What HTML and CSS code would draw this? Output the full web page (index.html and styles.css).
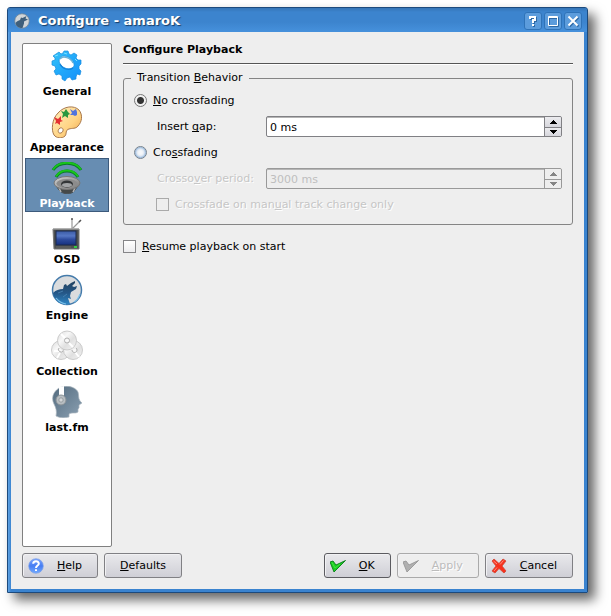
FILE: index.html
```html
<!DOCTYPE html>
<html lang="en">
<head>
<meta charset="utf-8">
<title>Configure - amaroK</title>
<link rel="stylesheet" href="styles.css">
</head>
<body>
<div class="window">
  <header class="titlebar">
    <svg class="title-icon" viewBox="0 0 32 32" aria-hidden="true">
      <circle cx="16" cy="16" r="14.500" fill="#d0d5d8" stroke="#6f8393" stroke-width="1.500"/>
      <path d="M3 20C6 16 9 15 12 14L14 9L17 10L25 6L23 11L28 13L20 17L20 21L17 30C9 30 4 26 3 20Z" fill="#3f5f7b"/>
    </svg>
    <span class="title">Configure - amaroK</span>
    <div class="window-controls">
      <button class="control" type="button" aria-label="Context help">
        <svg viewBox="0 0 12 12"><path d="M3 4V2H8V5H6V8M6 9V11" class="control-line"/></svg>
      </button>
      <button class="control" type="button" aria-label="Maximize">
        <svg viewBox="0 0 12 12"><path d="M1.500 1.500H10.500V10.500H1.500Z M1.500 2.500H10.500" class="control-box"/></svg>
      </button>
      <button class="control" type="button" aria-label="Close">
        <svg viewBox="0 0 12 12"><path d="M1.500 1.500L10.500 10.500M10.500 1.500L1.500 10.500" class="control-line"/></svg>
      </button>
    </div>
  </header>

  <div class="dialog">
    <div class="content">
      <nav class="sidebar">
        <a class="page" href="#general">
          <svg viewBox="0 0 32 32" aria-hidden="true">
            <defs><linearGradient id="gear" x1="0" y1="0" x2="1" y2="1"><stop offset="0" stop-color="#35c4f8"/><stop offset=".5" stop-color="#21a8fa"/><stop offset="1" stop-color="#1590fa"/></linearGradient></defs>
            <path fill="url(#gear)" stroke="#168de0" stroke-width=".7" stroke-linejoin="round" fill-rule="evenodd" d="M5 4L8 2L10 4L12 3L13 1L17 1L18 4L20 5L23 3L26 5L25 8L27 10L30 10L30 14L28 16L28 19L30 21L29 25L26 24L25 27L25 29L21 30L19 27L16 28L14 31L11 29L11 26L8 24L5 25L3 21L5 19L4 16L1 15L1 11L4 10L4 8L2 6ZM10 7C6 10 9 16 14 18C18 20 24 18 23 14C22 9 14 4 10 7Z"/>
            <path d="M9 9C12 5 20 8 22 13" fill="none" stroke="#6bb3d8" stroke-width="1.500"/>
            <path d="M9 14C11 19 18 21 22 18" fill="none" stroke="#1583d9" stroke-width="1.200"/>
            <path d="M4 6L7 5M13 3L16 4M24 9L26 11" stroke="#78e2ff"/>
          </svg>
          <span>General</span>
        </a>
        <a class="page" href="#appearance">
          <svg viewBox="0 0 32 32" aria-hidden="true">
            <defs><linearGradient id="wood" x1="0" y1="0" x2="1" y2="1"><stop offset="0" stop-color="#fff0c0"/><stop offset=".6" stop-color="#ffd383"/><stop offset="1" stop-color="#eea346"/></linearGradient></defs>
            <path d="M3 29C0 24 1 13 7 7C13 0 23-1 28 4C32 9 31 16 27 20C25 23 21 22 18 23C14 24 16 28 14 30C11 33 5 32 3 29ZM9 22C6 24 7 28 10 27C13 26 13 21 9 22Z" fill="url(#wood)" fill-rule="evenodd" stroke="#a8784b"/>
            <path d="M3 11L7 13L10 10L10 14L12 15L9 16L9 19L6 17L4 18L5 15Z" fill="#e43133"/>
            <path d="M10 5L13 6L15 3L17 6L19 8L17 9L17 12L14 10L11 12L12 8Z" fill="#2a9840"/>
            <path d="M19 3L22 5L25 3L26 6L26 9L24 10L22 9L19 9L21 7Z" fill="#5274dc"/>
          </svg>
          <span>Appearance</span>
        </a>
        <a class="page selected" href="#playback" aria-current="page">
          <svg viewBox="0 0 32 32" aria-hidden="true">
            <defs><linearGradient id="speaker" x1="0" y1="0" x2="1" y2="1"><stop offset="0" stop-color="#d5d5d5"/><stop offset=".6" stop-color="#999"/><stop offset="1" stop-color="#777"/></linearGradient></defs>
            <path d="M2 8C8-1 24-1 30 8M5 15C10 7 22 7 27 15" fill="none" stroke="#087b26" stroke-width="3"/>
            <path d="M2 7.500C8-1.500 24-1.500 30 7.500M5 14.500C10 6.500 22 6.500 27 14.500" fill="none" stroke="#18c51c" stroke-width="1.800"/>
            <path d="M4 22L8 28C12 33 21 33 24 28L28 22Z" fill="#454949" stroke="#4a5054"/>
            <path d="M8 26L10 30M24 26L22 30" stroke="#b5b5b5" stroke-width="1.500"/>
            <ellipse cx="16" cy="21" rx="13" ry="6.500" fill="url(#speaker)" stroke="#777"/>
            <ellipse cx="16" cy="21.500" rx="10.500" ry="4.500" fill="#8c8c8c"/>
            <ellipse cx="16" cy="22" rx="6" ry="3.500" fill="#333638"/>
            <ellipse cx="16" cy="23" rx="5" ry="2" fill="#a2a4a6"/>
          </svg>
          <span>Playback</span>
        </a>
        <a class="page" href="#osd">
          <svg viewBox="0 0 32 32" aria-hidden="true">
            <defs><linearGradient id="screen" x1="0" y1="0" x2="0" y2="1"><stop offset="0" stop-color="#3a5ba5"/><stop offset=".35" stop-color="#5577c4"/><stop offset=".6" stop-color="#2e4c9e"/><stop offset="1" stop-color="#15307e"/></linearGradient></defs>
            <path d="M21 11V1M22 10L29 3" stroke="#999" stroke-width="1.200"/>
            <path d="M21 0V2M28 4L30 2" stroke="#555" stroke-width="1.500"/>
            <path d="M2 11H28V31H3Z" fill="#4d5050" stroke="#777"/>
            <path d="M2 11H28" stroke="#aaa"/>
            <rect x="5" y="13" width="20" height="14" fill="url(#screen)" stroke="#1c2a4c"/>
            <path d="M5 29H20" stroke="#666"/><path d="M23 29H26" stroke="#30d941" stroke-width="1.800"/>
          </svg>
          <span>OSD</span>
        </a>
        <a class="page" href="#engine">
          <svg viewBox="0 0 32 32" aria-hidden="true">
            <defs><linearGradient id="wolf" x1="0" y1="0" x2="0" y2="1"><stop offset="0" stop-color="#23425f"/><stop offset=".5" stop-color="#245686"/><stop offset="1" stop-color="#2e86c4"/></linearGradient></defs>
            <circle cx="16" cy="16" r="14.500" fill="#dadcde" stroke="#457bab" stroke-width="1.500"/>
            <path d="M2 19C5 16 8 15 12 15L13 11L15 10L16 12L20 9L24 7L24 9L21 12L23 13L26 12L25 15L20 18L19 22L20 25L17 24L19 30C9 32 3 26 2 19Z" fill="url(#wolf)"/>
            <path d="M7 19L12 17M12 23L16 20" stroke="#4d86b5" stroke-width=".8"/>
            <path d="M5 24Q9 29 15 30M23 28Q27 26 29 20" fill="none" stroke="#7ec0e8" stroke-width="1.200"/>
          </svg>
          <span>Engine</span>
        </a>
        <a class="page" href="#collection">
          <svg viewBox="0 0 32 32" aria-hidden="true">
            <defs><linearGradient id="disc" x1="0" y1="0" x2="1" y2="1"><stop offset="0" stop-color="#dadada"/><stop offset=".35" stop-color="#f7f7f7"/><stop offset=".6" stop-color="#e0e0e0"/><stop offset="1" stop-color="#f5f5f5"/></linearGradient></defs>
            <g fill="url(#disc)" stroke="#c0c0c0" stroke-width=".8">
              <circle cx="10" cy="20" r="9.500"/><circle cx="22" cy="20" r="9.500"/><circle cx="16" cy="10.500" r="9.500"/>
            </g>
            <path d="M10 4L14 8M18 13L22 17M3 21L8 21M6 28L9 23M24 22L28 27" stroke="#fff" stroke-width="2"/>
            <g fill="#f8f8f8" stroke="#b0b0b0"><circle cx="16" cy="10.500" r="2.500"/><path d="M8 18A2.500 2.500 0 1 0 12 21M21 20A2.500 2.500 0 1 0 25 18"/></g>
          </svg>
          <span>Collection</span>
        </a>
        <a class="page" href="#lastfm">
          <svg viewBox="0 0 32 32" aria-hidden="true">
            <defs><linearGradient id="head" x1="0" y1="0" x2="1" y2="1"><stop offset="0" stop-color="#536b7e"/><stop offset="1" stop-color="#8ca1b3"/></linearGradient></defs>
            <path d="M5 30C6 25 5 22 3 18C0 12 2 6 8 2C14-1 24 0 27 6C28 9 27 12 29 15L31 17L28 19L28 22L27 23L27 26C25 28 20 26 18 28V31Q10 33 5 30Z" fill="url(#head)" stroke="#a9b4bd" stroke-width=".7"/>
            <path d="M8 10V1L13 0V10Z" fill="#fff"/>
            <circle cx="10" cy="14" r="5" fill="#b8bec2" stroke="#8a9297"/>
            <circle cx="10" cy="14" r="2.200" fill="#d3d6d8" stroke="#969da1"/>
          </svg>
          <span>last.fm</span>
        </a>
      </nav>

      <main class="main">
        <h1 class="heading">Configure Playback</h1>
        <fieldset class="group">
          <legend>Transition <u>B</u>ehavior</legend>
          <div class="rows">
            <div class="row">
              <input class="radio" type="radio" name="transition" id="no-crossfading" checked>
              <label for="no-crossfading"><u>N</u>o crossfading</label>
            </div>
            <div class="row field">
              <label for="gap">Insert <u>g</u>ap:</label>
              <div class="spin">
                <input type="text" id="gap" value="0 ms">
                <div class="steps">
                  <button type="button" aria-label="Increase gap"><svg viewBox="0 0 7 4"><path d="M3 0H4V1H5V2H6V3H7V4H0V3H1V2H2V1H3Z"/></svg></button>
                  <button type="button" aria-label="Decrease gap"><svg viewBox="0 0 7 4"><path d="M0 0H7V1H6V2H5V3H4V4H3V3H2V2H1V1H0Z"/></svg></button>
                </div>
              </div>
            </div>
            <div class="row">
              <input class="radio" type="radio" name="transition" id="crossfading">
              <label for="crossfading">Cro<u>s</u>sfading</label>
            </div>
            <div class="row field disabled">
              <label for="period">Crosso<u>v</u>er period:</label>
              <div class="spin">
                <input type="text" id="period" value="3000 ms" disabled>
                <div class="steps">
                  <button type="button" aria-label="Increase period" disabled><svg viewBox="0 0 7 4"><path d="M3 0H4V1H5V2H6V3H7V4H0V3H1V2H2V1H3Z"/></svg></button>
                  <button type="button" aria-label="Decrease period" disabled><svg viewBox="0 0 7 4"><path d="M0 0H7V1H6V2H5V3H4V4H3V3H2V2H1V1H0Z"/></svg></button>
                </div>
              </div>
            </div>
            <div class="row nested disabled">
              <input class="check" type="checkbox" id="manual" disabled>
              <label for="manual">Crossfade on man<u>u</u>al track change only</label>
            </div>
          </div>
        </fieldset>
        <div class="row resume">
          <input class="check" type="checkbox" id="resume">
          <label for="resume"><u>R</u>esume playback on start</label>
        </div>
      </main>
    </div>

    <footer class="actions">
      <button class="button" type="button">
        <svg viewBox="0 0 16 16" aria-hidden="true">
          <defs><linearGradient id="help" x1="0" y1="0" x2="0" y2="1"><stop offset="0" stop-color="#7ba5ff"/><stop offset=".5" stop-color="#467cf2"/><stop offset="1" stop-color="#72abff"/></linearGradient></defs>
          <circle cx="8" cy="8" r="7.300" fill="url(#help)" stroke="#7ca0e8" stroke-width=".7"/>
          <path d="M5.200 5.800C5.200 2.500 10.800 2.500 10.800 5.700C10.800 7.500 8 7.500 8 10M8 11.200V13" fill="none" stroke="#fff" stroke-width="2"/>
        </svg>
        <span><u>H</u>elp</span>
      </button>
      <button class="button text-only" type="button"><span><u>D</u>efaults</span></button>
      <button class="button default push" type="button">
        <svg viewBox="0 0 16 16" aria-hidden="true"><path d="M0 4L3 3L6 7L15.500 2.500L4 14Z" fill="#19cf20" stroke="#087c17" stroke-width=".9"/><path d="M2 4.500L5 10L10 6" fill="none" stroke="#4fe44a" stroke-width=".8"/></svg>
        <span><u>O</u>K</span>
      </button>
      <button class="button" type="button" disabled>
        <svg viewBox="0 0 16 16" aria-hidden="true"><path d="M0 4L3 3L6 7L15.500 2.500L4 14Z" fill="#b0b0b0" stroke="#979797" stroke-width=".9"/></svg>
        <span><u>A</u>pply</span>
      </button>
      <button class="button" type="button">
        <svg viewBox="0 0 16 16" aria-hidden="true"><path d="M1 3L3 1L8 5.500L12 1L15 3L11 8L15 13L13 15L8 10.500L4 15L1 13L5 8Z" fill="#f8301c" stroke="#cf4636" stroke-width=".8" stroke-linejoin="round"/><path d="M2.500 3L6 6M12.500 2.500L9 6.500M3 13L6 9.500" fill="none" stroke="#ff9080"/></svg>
        <span><u>C</u>ancel</span>
      </button>
    </footer>
  </div>
</div>
</body>
</html>
```
FILE: styles.css
```css
* {
  box-sizing: border-box;
}

body {
  margin: 0;
  padding: 7px 23px 23px 7px;
  background: #fff;
  color: #000;
  font: 11px/14px "DejaVu Sans", sans-serif;
}

button,
input {
  margin: 0;
  font: inherit;
  color: inherit;
}

svg {
  display: block;
  flex: none;
}

u {
  text-decoration: underline;
  text-decoration-skip-ink: none;
  text-underline-offset: 1px;
}

.window {
  display: flex;
  flex-direction: column;
  min-height: calc(100vh - 30px);
  border: 1px solid #1c4a7d;
  border-radius: 3px 3px 0 0;
  background: linear-gradient(90deg, #62a4e4, #3a83cf 3px);
  box-shadow: 7px 7px 12px rgba(0, 0, 0, 0.6);
}

.titlebar {
  display: flex;
  align-items: center;
  height: 24px;
  padding: 1px 5px 0 6px;
  border-radius: 2px 2px 0 0;
  background: linear-gradient(#3474b6, #3c84ce 4px, #3c84ce 14px, #4691dc);
}

.title-icon {
  width: 16px;
  height: 16px;
}

.title {
  flex: 1;
  padding-left: 8px;
  color: #fff;
  font-size: 13px;
  font-weight: bold;
  text-shadow: 1px 1px 1px #163c65;
}

.window-controls {
  display: flex;
  gap: 2px;
}

.control {
  display: grid;
  place-items: center;
  width: 18px;
  height: 18px;
  padding: 0;
  border: 1px solid #2f73b8;
  border-radius: 3px;
  background: #5c9cdc;
}

.control svg {
  width: 12px;
  height: 12px;
  fill: none;
  stroke: #fff;
  filter: drop-shadow(1px 1px 0 #2e69a5);
}

.control-line {
  stroke-width: 2;
}

.control-box {
  stroke-width: 1;
}

.dialog {
  display: flex;
  flex: 1;
  flex-direction: column;
  gap: 6px;
  margin: 0 3px 3px;
  padding: 11px;
  background: #eee;
}

.content {
  display: flex;
  flex: 1;
  gap: 11px;
}

.sidebar {
  display: flex;
  flex: none;
  flex-direction: column;
  gap: 2px;
  width: 90px;
  padding: 2px;
  border: 1px solid #808080;
  border-radius: 2px;
  background: #fff;
}

.page {
  display: flex;
  flex-direction: column;
  align-items: center;
  gap: 3px;
  height: 54px;
  padding-top: 3px;
  border: 1px solid transparent;
  color: #000;
  font-weight: bold;
  text-decoration: none;
}

.page svg {
  width: 32px;
  height: 32px;
}

.page.selected {
  border-color: #3c5a7c;
  background: #678db2;
  color: #fff;
}

.main {
  flex: 1;
  min-width: 0;
}

.heading {
  margin: 0;
  padding-bottom: 6px;
  border-bottom: 1px solid #555;
  box-shadow: 0 1px #fff;
  font-size: 11px;
  line-height: 14px;
}

.group {
  min-width: 0;
  margin: 7px 0 0;
  padding: 5px 10px 9px;
  border: 1px solid #848484;
  border-radius: 3px;
}

.group legend {
  margin-left: -3px;
  padding: 0 6px;
}

.rows {
  display: grid;
  gap: 5px;
}

.row {
  display: flex;
  align-items: center;
  gap: 6px;
  height: 21px;
}

.field {
  display: grid;
  grid-template-columns: 109px 1fr;
  gap: 0;
  padding-left: 23px;
}

.nested {
  padding-left: 22px;
}

.resume {
  margin-top: 11px;
}

.radio,
.check {
  flex: none;
  width: 13px;
  height: 13px;
  appearance: none;
  border: 1px solid #858588;
  background: linear-gradient(#fff, #ececee);
}

.radio {
  border: 1px solid #75818d;
  border-radius: 50%;
  background: #f5f7fa;
  box-shadow: inset 0 0 0 1px #a3c1e2, inset 0 0 2px 2px #c5d6ea;
}

.radio:checked {
  border: 1px solid #777;
  background: radial-gradient(circle, #333 3px, #f1f1f1 4px);
  box-shadow: none;
}

.check:disabled {
  border-color: #aaa;
  background: #eee;
}

.disabled label {
  color: #c6c6c6;
  text-shadow: 1px 1px #fff;
}

.spin {
  display: flex;
  height: 21px;
  overflow: hidden;
  border: 1px solid #808084;
  border-radius: 2px;
  background: #fff;
  box-shadow: inset 0 1px #b5b5b5;
}

.spin input {
  flex: 1;
  min-width: 0;
  padding: 2px 3px 0;
  border: 0;
  background: transparent;
}

.steps {
  display: grid;
  grid-template-rows: 1fr 1fr;
  width: 17px;
  border-left: 1px solid #808084;
}

.steps button {
  display: grid;
  place-items: center;
  min-height: 0;
  padding: 0;
  border: 0;
  background: linear-gradient(#ececef, #d6d6dc);
}

.steps button + button {
  border-top: 1px solid #808084;
}

.steps svg {
  width: 7px;
  height: 4px;
}

.disabled .spin {
  border-color: #999;
  background: #eee;
}

.disabled .spin input {
  color: #bebebe;
}

.disabled .steps,
.disabled .steps button + button {
  border-color: #999;
}

.disabled .steps button {
  background: #eee;
  fill: #858585;
}

.actions {
  display: flex;
  gap: 6px;
}

.button {
  display: flex;
  align-items: center;
  gap: 13px;
  height: 25px;
  padding: 0 15px 0 5px;
  border: 1px solid #808084;
  border-radius: 3px;
  background: linear-gradient(#e9e9ec, #cfcfd6);
  box-shadow: inset 1px 1px #f1f1f3;
}

.button svg {
  width: 16px;
  height: 16px;
}

.text-only {
  padding: 0 15px;
}

.default {
  border-color: #5b5b60;
}

.push {
  margin-left: auto;
}

.button:disabled {
  border-color: #aaa;
  background: #eee;
  color: #bcbcbc;
  text-shadow: 1px 1px #fff;
}
```
